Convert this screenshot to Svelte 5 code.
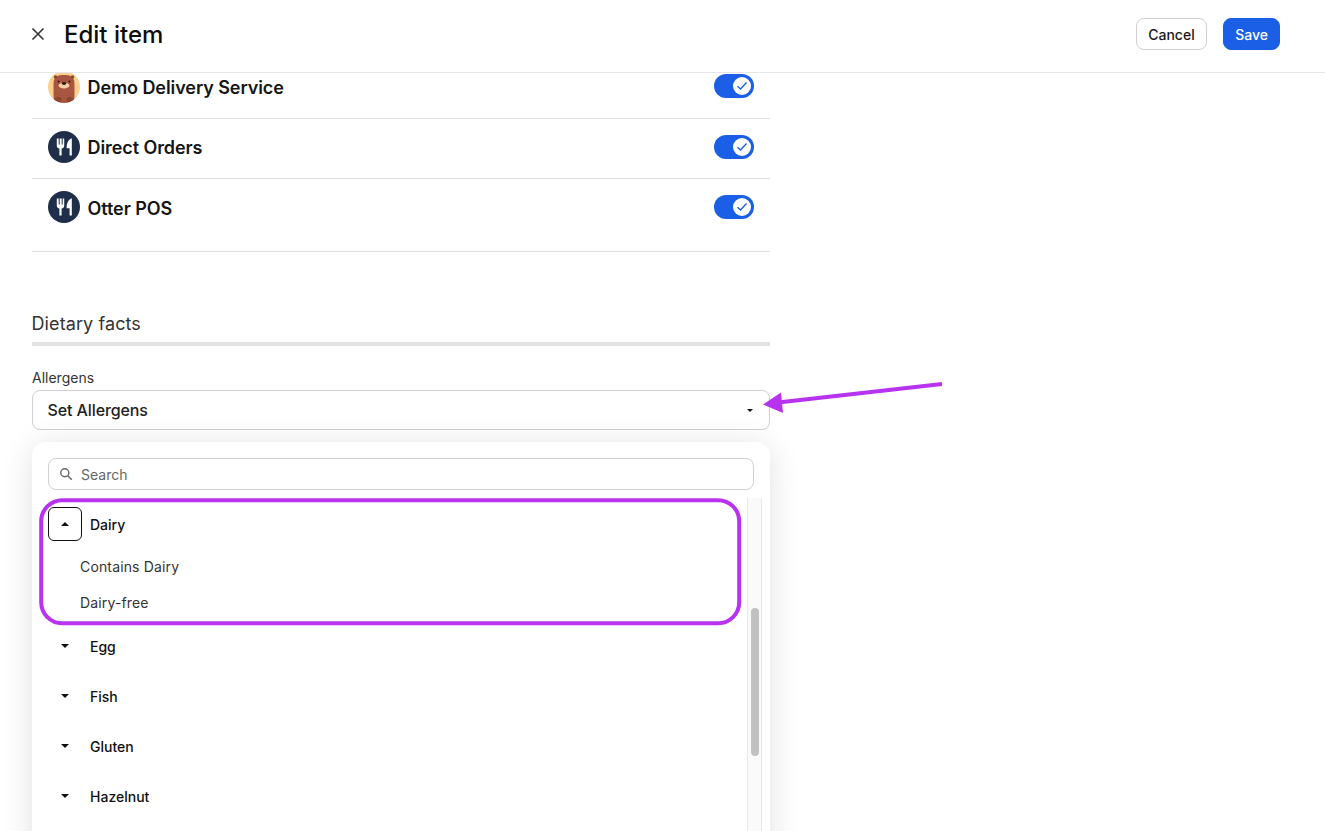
<script lang="ts">
  // Edit item panel with the allergens dropdown open
  type Channel = { name: string; kind: 'otter' | 'fork' };
  const channels: Channel[] = [
    { name: 'Demo Delivery Service', kind: 'otter' },
    { name: 'Direct Orders', kind: 'fork' },
    { name: 'Otter POS', kind: 'fork' }
  ];
  const collapsed = ['Egg', 'Fish', 'Gluten', 'Hazelnut'];
</script>

<div class="page">
  <header class="topbar">
    <div class="title">
      <button class="close" aria-label="Close">
        <svg width="14" height="14" viewBox="0 0 14 14"><path d="M1.5 1.5l11 11M12.5 1.5l-11 11" stroke="#333" stroke-width="1.6" fill="none" /></svg>
      </button>
      <h1>Edit item</h1>
    </div>
    <div class="actions">
      <button class="btn">Cancel</button>
      <button class="btn primary">Save</button>
    </div>
  </header>

  <main class="content">
    <ul class="channels">
      {#each channels as c}
        <li class="channel">
          <div class="who">
            {#if c.kind === 'otter'}
              <svg class="avatar" viewBox="0 0 32 32">
                <defs><clipPath id="circ"><circle cx="16" cy="16" r="16" /></clipPath></defs>
                <g clip-path="url(#circ)">
                  <rect width="32" height="32" fill="#fcd08f" />
                  <rect x="5.5" y="4" width="21" height="30" rx="8" fill="#a8563f" />
                  <circle cx="7.5" cy="6" r="1.8" fill="#8c4632" />
                  <circle cx="24.5" cy="6" r="1.8" fill="#8c4632" />
                  <ellipse cx="16" cy="14.5" rx="5.4" ry="3" fill="#f4cfa6" />
                  <circle cx="10.5" cy="10.5" r="1" fill="#2b1a14" />
                  <circle cx="21.5" cy="10.5" r="1" fill="#2b1a14" />
                  <ellipse cx="16" cy="12.5" rx="2.2" ry="1.4" fill="#2b1a14" />
                  <ellipse cx="10" cy="28.5" rx="3.6" ry="2.6" fill="#8c4632" />
                  <ellipse cx="22" cy="28.5" rx="3.6" ry="2.6" fill="#8c4632" />
                </g>
              </svg>
            {:else}
              <svg class="avatar" viewBox="0 0 32 32">
                <circle cx="16" cy="16" r="16" fill="#1f2f4a" />
                <path d="M8.8 7.5v7a3 3 0 0 0 2.6 3V24.5h2.2v-7a3 3 0 0 0 2.6-3v-7h-1.5v6h-1v-6h-2v6h-1v-6z" fill="#fff" />
                <path d="M23.8 7.2c-3 1-5.2 4-5.2 10h3V24.5h2.2z" fill="#fff" />
              </svg>
            {/if}
            <span>{c.name}</span>
          </div>
          <span class="toggle">
            <span class="knob">
              <svg width="12" height="10" viewBox="0 0 12 10"><path d="M1.5 5.2l3 2.8 6-6.4" stroke="#1a5fe6" stroke-width="1.4" fill="none" /></svg>
            </span>
          </span>
        </li>
      {/each}
    </ul>

    <section class="dietary">
      <h2>Dietary facts</h2>
      <label class="field-label" for="allergens">Allergens</label>
      <button class="select" id="allergens">
        <span>Set Allergens</span>
        <i class="caret down small"></i>
      </button>

      <div class="popup">
        <div class="search">
          <svg width="14" height="14" viewBox="0 0 14 14"><circle cx="5.8" cy="5.8" r="4" stroke="#666" stroke-width="1.4" fill="none" /><path d="M8.8 8.8l4 4" stroke="#666" stroke-width="1.5" /></svg>
          <span>Search</span>
        </div>
        <div class="listwrap">
          <div class="list">
            <div class="group">
              <span class="expander open"><i class="caret up"></i></span>
              <span>Dairy</span>
            </div>
            <div class="option">Contains Dairy</div>
            <div class="option">Dairy-free</div>
            {#each collapsed as name}
              <div class="group">
                <span class="expander"><i class="caret down"></i></span>
                <span>{name}</span>
              </div>
            {/each}
          </div>
          <div class="scrollbar"><div class="thumb"></div></div>
        </div>
      </div>
    </section>
  </main>

  <svg class="annotation" width="1325" height="831" viewBox="0 0 1325 831">
    <rect x="41.2" y="500.2" width="698" height="123" rx="21" fill="none" stroke="#b833f0" stroke-width="4" />
    <path d="M942 384L778 402.5" stroke="#b833f0" stroke-width="4" fill="none" />
    <path d="M763 404.5L781 392.5L783 413z" fill="#b833f0" />
  </svg>
</div>

<style>
  :global(body) {
    margin: 0;
    background: #fff;
    font-family: Inter, "Liberation Sans", sans-serif;
    color: #111;
  }
  .page {
    position: relative;
    height: 831px;
    overflow: hidden;
    display: flex;
    flex-direction: column;
  }
  .topbar {
    flex: none;
    height: 68px;
    box-sizing: content-box;
    border-bottom: 1px solid #e6e6e6;
    display: flex;
    align-items: center;
    justify-content: space-between;
    padding: 0 45px 4px 31px;
    background: #fff;
  }
  .title { display: flex; align-items: center; gap: 19px; }
  .close {
    width: 14px;
    height: 14px;
    padding: 0;
    border: 0;
    background: none;
    display: flex;
  }
  h1 {
    margin: 0;
    padding-top: 1px;
    font-size: 24px;
    font-weight: 500;
    line-height: 32px;
    color: #0d0d0d;
  }
  .actions { display: flex; gap: 16px; }
  .btn {
    height: 32px;
    padding: 0 11.5px;
    border: 1px solid #d0d0d0;
    border-radius: 8px;
    background: #fff;
    font: 500 14px Inter, "Liberation Sans", sans-serif;
    color: #1a1a1a;
  }
  .btn.primary {
    padding: 0 11px;
    background: #1a5fe6;
    border-color: #1a5fe6;
    color: #fff;
  }
  .content {
    flex: 1;
    min-height: 0;
    overflow: hidden;
    padding: 0 32px;
    width: 738px;
  }
  .channels {
    list-style: none;
    margin: -14px 0 0;
    padding: 0;
  }
  .channel {
    display: flex;
    justify-content: space-between;
    align-items: flex-start;
    height: 59px;
    border-bottom: 1px solid #dedede;
    padding: 0 16px;
  }
  .channel:last-child { height: 72px; }
  .who {
    display: flex;
    align-items: center;
    gap: 7.5px;
    margin-top: 12px;
    font-size: 18px;
    font-weight: 600;
    letter-spacing: -0.08px;
    color: #161616;
  }
  .channel:last-child .who span { position: relative; top: 1px; }
  .avatar { width: 32px; height: 32px; display: block; }
  .toggle {
    display: flex;
    justify-content: flex-end;
    align-items: center;
    width: 40px;
    height: 24px;
    margin-top: 16px;
    padding: 0 3px;
    box-sizing: border-box;
    border-radius: 12px;
    background: #1a5fe6;
  }
  .channel:first-child .toggle { margin-top: 15px; }
  .knob {
    width: 18px;
    height: 18px;
    border-radius: 50%;
    background: #fff;
    display: flex;
    align-items: center;
    justify-content: center;
  }
  .dietary { margin-top: 60px; }
  h2 {
    margin: 0;
    font-size: 18px;
    font-weight: 400;
    line-height: 24px;
    height: 30px;
    border-bottom: 4px solid #e2e2e2;
    color: #333;
    letter-spacing: 0.1px;
    text-indent: -0.5px;
  }
  .field-label {
    display: block;
    margin-top: 22px;
    font-size: 14px;
    line-height: 20px;
    color: #333;
  }
  .select {
    width: 100%;
    height: 40px;
    margin-top: 2px;
    padding: 0 16px 0 14.5px;
    display: flex;
    align-items: center;
    justify-content: space-between;
    background: #fff;
    border: 1px solid #d0d0d0;
    border-radius: 8px;
    font: 500 16px Inter, "Liberation Sans", sans-serif;
    letter-spacing: -0.1px;
    color: #222;
  }
  .caret {
    display: block;
    width: 0;
    height: 0;
    border-left: 4px solid transparent;
    border-right: 4px solid transparent;
  }
  .caret.down { border-top: 4px solid #111; }
  .caret.up { border-bottom: 4px solid #111; }
  .caret.small {
    border-left-width: 3.5px;
    border-right-width: 3.5px;
    border-top-width: 3.5px;
  }
  .popup {
    margin-top: 12px;
    height: 420px;
    padding: 16px 16px 0;
    background: #fff;
    border-radius: 14px;
    box-shadow: 0 4px 32px rgba(0, 0, 0, 0.12);
  }
  .search {
    height: 32px;
    box-sizing: border-box;
    border: 1px solid #d0d0d0;
    border-radius: 8px;
    display: flex;
    align-items: center;
    gap: 8px;
    padding: 0 10px;
    font-size: 14px;
    color: #666;
  }
  .listwrap {
    display: flex;
    margin-top: 8px;
    margin-right: -8px;
    justify-content: space-between;
    height: 400px;
  }
  .list { padding-top: 1px; }
  .group {
    display: flex;
    align-items: center;
    gap: 8px;
    height: 50px;
    font-size: 14px;
    font-weight: 500;
    color: #111;
  }
  .expander {
    width: 34px;
    height: 34px;
    box-sizing: border-box;
    display: flex;
    align-items: center;
    justify-content: center;
    border: 1px solid transparent;
    border-radius: 6px;
  }
  .expander.open { border-color: #111; }
  .option {
    height: 36px;
    line-height: 36px;
    padding-left: 32px;
    font-size: 14px;
    letter-spacing: 0.15px;
    color: #333;
  }
  .scrollbar {
    width: 15px;
    box-sizing: border-box;
    background: #fafafa;
    border-left: 1px solid #e8e8e8;
    border-right: 1px solid #e8e8e8;
    padding: 110px 3px 0;
  }
  .thumb {
    width: 8px;
    height: 148px;
    border-radius: 4px;
    background: #c1c1c1;
  }
  .annotation {
    position: absolute;
    left: 0;
    top: 0;
    pointer-events: none;
  }
</style>
